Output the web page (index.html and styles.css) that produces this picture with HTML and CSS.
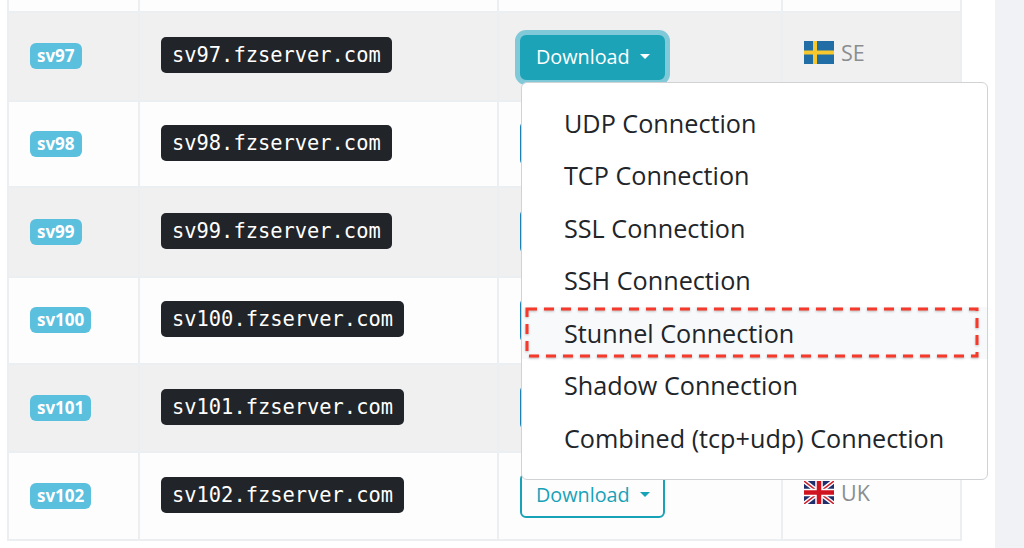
FILE: index.html
```html
<!DOCTYPE html>
<html lang="en">
<head>
    <meta charset="UTF-8">
    <title>Servers</title>
    <link rel="stylesheet" href="styles.css">
</head>
<body>
    <div class="main">
        <table class="servers">
            <colgroup>
                <col class="col-id">
                <col class="col-host">
                <col class="col-action">
                <col class="col-location">
            </colgroup>
            <tr class="row-top"><td></td><td></td><td></td><td></td></tr>
            <tr class="row-first odd">
                <td><span class="badge">sv97</span></td>
                <td><code class="host">sv97.fzserver.com</code></td>
                <td>
                    <div class="dropdown">
                        <button class="btn btn-open">Download <span class="caret"></span></button>
                        <div class="menu">
                            <a class="menu-item">UDP Connection</a>
                            <a class="menu-item">TCP Connection</a>
                            <a class="menu-item">SSL Connection</a>
                            <a class="menu-item">SSH Connection</a>
                            <a class="menu-item active">Stunnel Connection</a>
                            <a class="menu-item">Shadow Connection</a>
                            <a class="menu-item">Combined (tcp+udp) Connection</a>
                            <!-- red annotation round the stunnel item -->
                            <svg class="callout" width="456" height="52" viewBox="0 0 456 52">
                                <rect x="2" y="2" width="450" height="47" fill="none" stroke="#f5392b" stroke-width="3" stroke-dasharray="10 7"/>
                            </svg>
                        </div>
                    </div>
                </td>
                <td>
                    <span class="location">
                        <svg class="flag" width="30" height="23" viewBox="0 0 30 23">
                            <rect width="30" height="23" fill="#206ea5"/>
                            <rect x="9" width="4" height="23" fill="#f7c92f"/>
                            <rect y="9.5" width="30" height="4" fill="#f7c92f"/>
                        </svg>
                        SE
                    </span>
                </td>
            </tr>
            <tr class="row-b">
                <td><span class="badge">sv98</span></td>
                <td><code class="host">sv98.fzserver.com</code></td>
                <td><button class="btn btn-blue"></button></td>
                <td></td>
            </tr>
            <tr class="row-a odd">
                <td><span class="badge">sv99</span></td>
                <td><code class="host">sv99.fzserver.com</code></td>
                <td><button class="btn btn-blue"></button></td>
                <td></td>
            </tr>
            <tr class="row-c">
                <td><span class="badge">sv100</span></td>
                <td><code class="host">sv100.fzserver.com</code></td>
                <td><button class="btn btn-blue"></button></td>
                <td></td>
            </tr>
            <tr class="row-d odd">
                <td><span class="badge">sv101</span></td>
                <td><code class="host">sv101.fzserver.com</code></td>
                <td><button class="btn btn-blue"></button></td>
                <td></td>
            </tr>
            <tr class="row-e">
                <td><span class="badge">sv102</span></td>
                <td><code class="host">sv102.fzserver.com</code></td>
                <td><button class="btn">Download <span class="caret"></span></button></td>
                <td>
                    <span class="location">
                        <svg class="flag" width="30" height="23" viewBox="0 0 60 46">
                            <rect width="60" height="46" fill="#1f2f6b"/>
                            <path d="M0 0L60 46M60 0L0 46" stroke="#fff" stroke-width="9"/>
                            <path d="M0 0L60 46M60 0L0 46" stroke="#cf1f2c" stroke-width="3"/>
                            <path d="M30 0V46M0 23H60" stroke="#fff" stroke-width="15"/>
                            <path d="M30 0V46M0 23H60" stroke="#cf1420" stroke-width="9"/>
                        </svg>
                        UK
                    </span>
                </td>
            </tr>
        </table>
    </div>
    <div class="strip"></div>
</body>
</html>
```

FILE: styles.css
```css
html, body {
    height: 100%;
}

body {
    margin: 0;
    display: flex;
    overflow: hidden;
    background-color: #fff;
    color: #212529;
    font-family: "Open Sans", "Noto Sans", sans-serif;
}

.main {
    width: 995px;
    padding-left: 7px;
    box-sizing: border-box;
}

.strip {
    flex: 1;
    background-color: #f0f2f5;
}

.servers {
    width: 953px;
    table-layout: fixed;
    border-collapse: collapse;
    background-color: #fdfdfd;
    border-bottom: 2px solid #eceff2;
    border-left: 2px solid #eceff2;
    border-right: 2px solid #eceff2;
}

.col-id { width: 131px; }
.col-host { width: 359px; }
.col-action { width: 284px; }
.col-location { width: 179px; }

.servers td {
    padding: 0 0 0 21px;
    border: 2px solid #eceff2;
    vertical-align: middle;
}

.servers .row-top td {
    padding: 0;
    border-top: 0;
}

.row-top { height: 12px; }
.row-first { height: 89px; }
.row-a { height: 90px; }
.row-b { height: 86px; }
.row-c { height: 87px; }
.row-d { height: 88px; }
.row-e { height: 88px; }

.odd {
    background-color: #f0f0f0;
}

.badge {
    display: inline-block;
    height: 26px;
    margin-bottom: 1px;
    padding: 0 7px;
    border-radius: 6px;
    background-color: #5bc0de;
    color: #fff;
    font-size: 17px;
    font-weight: 700;
    line-height: 26px;
    vertical-align: middle;
}

.host {
    display: inline-block;
    margin-bottom: 3px;
    padding: 0 11px;
    height: 36px;
    border-radius: 5px;
    background-color: #212529;
    color: #fff;
    font-family: "DejaVu Sans Mono", monospace;
    font-size: 20.4px;
    line-height: 37px;
    vertical-align: middle;
}

.dropdown {
    position: relative;
    display: inline-block;
    margin-top: 1px;
    vertical-align: middle;
}

.btn {
    display: inline-flex;
    align-items: center;
    gap: 10px;
    height: 45px;
    width: 145px;
    margin-bottom: 1px;
    padding: 0 0 2px 14px;
    box-sizing: border-box;
    background-color: transparent;
    border: 2px solid #17a2b8;
    border-radius: 6px;
    color: #17a2b8;
    font-family: inherit;
    font-size: 19.8px;
    vertical-align: middle;
}

.btn-blue {
    border-color: #1b80b4;
}

.btn-open {
    margin-bottom: 0;
    background-color: #1ca3b8;
    border-color: #1ca3b8;
    color: #fff;
    box-shadow: 0 0 0 5px #80c9d9;
}

.caret {
    width: 0;
    height: 0;
    border-top: 5px solid currentColor;
    border-left: 5px solid transparent;
    border-right: 5px solid transparent;
}

.menu {
    position: absolute;
    z-index: 10;
    top: 47px;
    left: 1px;
    width: 467px;
    height: 398px;
    padding-top: 14.4px;
    box-sizing: border-box;
    background-color: #fff;
    border: 1px solid #d0d3d6;
    border-radius: 6px;
}

.menu-item {
    display: block;
    height: 52.5px;
    padding-left: 42px;
    font-size: 25.2px;
    line-height: 52px;
    white-space: nowrap;
}

.menu-item.active {
    background-color: #f8f9fa;
}

.callout {
    position: absolute;
    top: 224px;
    left: 3px;
    filter: drop-shadow(0 1px 1px rgba(0, 0, 0, 0.25));
}

.location {
    display: inline-flex;
    align-items: center;
    gap: 7px;
    margin-bottom: 8px;
    color: #8a8d90;
    font-size: 21.5px;
    line-height: 23px;
    vertical-align: middle;
}

.flag {
    display: block;
}
```
